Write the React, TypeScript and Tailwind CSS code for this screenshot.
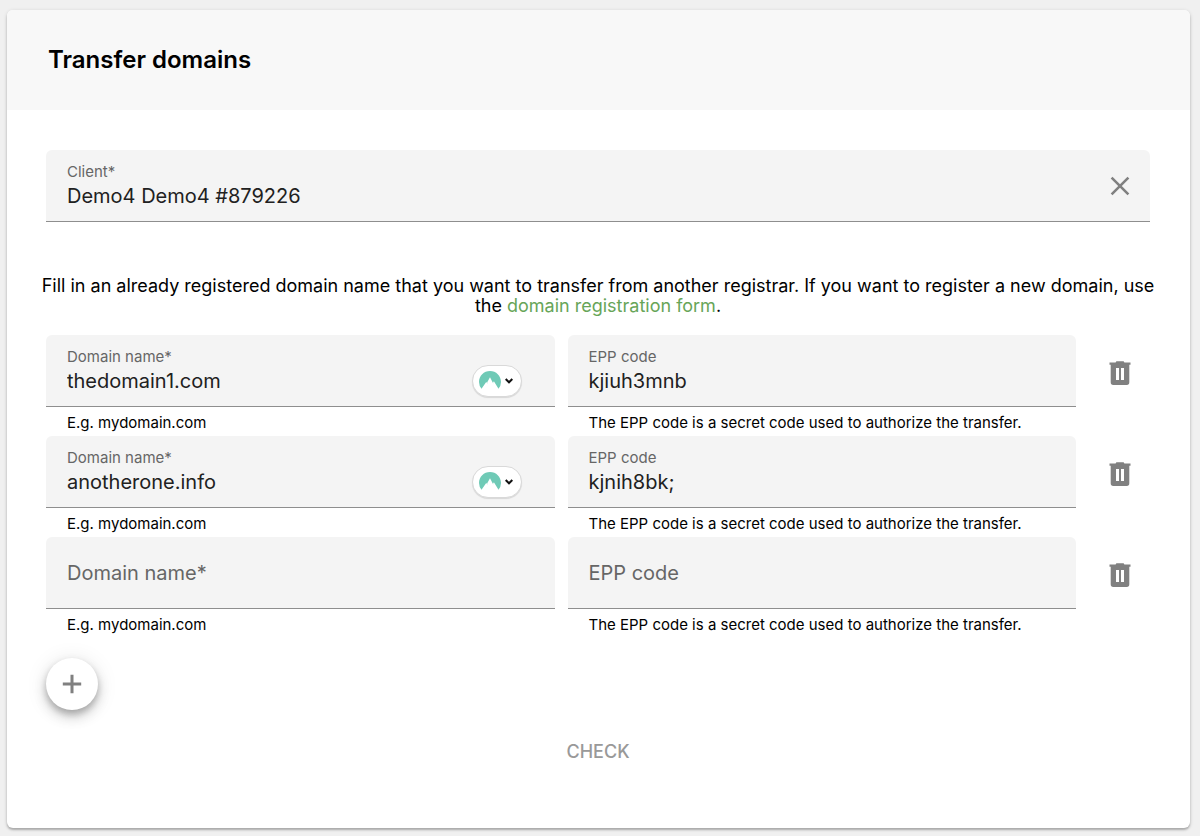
import { useId, useState } from "react";

type Entry = { id: number; domain: string; epp: string };

const initialEntries: Entry[] = [
  { id: 1, domain: "thedomain1.com", epp: "kjiuh3mnb" },
  { id: 2, domain: "anotherone.info", epp: "kjnih8bk;" },
  { id: 3, domain: "", epp: "" },
];

function CloseIcon() {
  return (
    <svg viewBox="0 0 20 20" className="size-5" fill="none" stroke="currentColor" strokeWidth="2.6" aria-hidden="true">
      <path d="M1.6 1.6 18.4 18.4M18.4 1.6 1.6 18.4" />
    </svg>
  );
}

function TrashIcon() {
  return (
    <svg viewBox="0 0 22 24" className="h-6 w-[22px]" fill="currentColor" aria-hidden="true">
      <path
        fillRule="evenodd"
        d="M0.5 1.4H6.6L7.4 0.2H14.6L15.4 1.4H21.5V3.8H20.3V21.3Q20.3 24 17.8 24H4.2Q1.7 24 1.7 21.3V3.8H0.5ZM7 7V19H10V7ZM12 7V19H15V7Z"
      />
    </svg>
  );
}

function PlusIcon() {
  return (
    <svg viewBox="0 0 20 20" className="size-5" fill="none" stroke="currentColor" strokeWidth="3" aria-hidden="true">
      <path d="M10 0.8V19.2M0.8 10H19.2" />
    </svg>
  );
}

function VaultButton() {
  return (
    <button
      type="button"
      aria-label="Open password manager"
      className="flex h-8 w-[50px] shrink-0 items-center gap-1 rounded-full border border-[#d9d9d9] bg-white pl-[6px] text-[#111111] shadow-[0_1px_1px_rgba(0,0,0,0.12)]"
    >
      <svg viewBox="0 0 22 20" className="h-5 w-[22px]" aria-hidden="true">
        <path
          fill="#6fcab6"
          d="M2.5 17.8A11 11 0 0 1 0 11C0 4.9 4.9 0 11 0S22 4.9 22 11A11 11 0 0 1 19.5 17.8L14.9 10.2 14 11.8 14.5 12.9 11 6.3 8.1 11.4 9 13 7.2 10.9Z"
        />
      </svg>
      <svg viewBox="0 0 8 6" className="h-[6px] w-2" fill="none" stroke="currentColor" strokeWidth="2" aria-hidden="true">
        <path d="M0.7 1 4 4.3 7.3 1" />
      </svg>
    </button>
  );
}

type FieldProps = {
  label: string;
  value: string;
  onChange: (value: string) => void;
  hint?: string;
  action?: React.ReactNode;
};

function Field({ label, value, onChange, hint, action }: FieldProps) {
  const id = useId();
  const [floated] = useState(value !== "");
  return (
    <div className="min-w-0">
      <div className="flex h-[72px] items-center rounded-t-md border-b border-[#8e8e8e] bg-[#f4f4f4] pl-[21px]">
        <div className="flex min-w-0 flex-1 flex-col">
          {floated && (
            <label htmlFor={id} className="text-[15px] leading-5 text-[#666666]">
              {label}
            </label>
          )}
          <input
            id={id}
            aria-label={label}
            value={value}
            placeholder={floated ? undefined : label}
            onChange={(event) => onChange(event.target.value)}
            className="h-7 w-full bg-transparent text-xl text-[#212121] outline-none placeholder:text-[#666666]"
          />
        </div>
        {action}
      </div>
      {hint && <p className="flex h-[29px] items-center pt-[3px] pl-[21px] text-[15px] leading-5">{hint}</p>}
    </div>
  );
}

export default function App() {
  const [client, setClient] = useState("Demo4 Demo4 #879226");
  const [entries, setEntries] = useState(initialEntries);

  const update = (id: number, patch: Partial<Entry>) =>
    setEntries((list) => list.map((entry) => (entry.id === id ? { ...entry, ...patch } : entry)));

  return (
    <div className="flex min-h-screen flex-col bg-[#f0f0f0] pt-[10px] pr-[10px] pb-2 pl-[7px] font-['Inter','Liberation_Sans',sans-serif] text-black">
      <main className="flex-1 rounded-md bg-white shadow-[0_2px_2px_rgba(0,0,0,0.22),0_1px_4px_rgba(0,0,0,0.14)]">
        <header className="flex h-[100px] items-center rounded-t-md bg-[#f8f8f8] pl-[41px]">
          <h1 className="text-2xl font-semibold">Transfer domains</h1>
        </header>
        <form className="px-10 pt-10 pb-8 pl-[39px]" onSubmit={(event) => event.preventDefault()}>
          <Field
            label="Client*"
            value={client}
            onChange={setClient}
            action={
              <button type="button" aria-label="Clear client" onClick={() => setClient("")} className="mr-5 text-[#808080]">
                <CloseIcon />
              </button>
            }
          />
          <p className="-mx-2 mt-[54px] mb-[19px] text-center text-lg leading-5">
            Fill in an already registered domain name that you want to transfer from another registrar. If you want to
            register a new domain, use the{" "}
            <a href="#register" className="text-[#67a558]">
              domain registration form
            </a>
            .
          </p>
          {entries.map((entry) => (
            <div key={entry.id} className="grid grid-cols-[1fr_1fr_61px] gap-x-[13px]">
              <Field
                label="Domain name*"
                value={entry.domain}
                onChange={(domain) => update(entry.id, { domain })}
                hint="E.g. mydomain.com"
                action={
                  entry.domain && (
                    <div className="mr-[33px] pt-5">
                      <VaultButton />
                    </div>
                  )
                }
              />
              <Field
                label="EPP code"
                value={entry.epp}
                onChange={(epp) => update(entry.id, { epp })}
                hint="The EPP code is a secret code used to authorize the transfer."
              />
              <button
                type="button"
                aria-label="Remove domain"
                onClick={() => setEntries((list) => list.filter((item) => item.id !== entry.id))}
                className="flex h-[76px] items-center justify-center text-[#808080]"
              >
                <TrashIcon />
              </button>
            </div>
          ))}
          <button
            type="button"
            aria-label="Add domain"
            onClick={() => setEntries((list) => [...list, { id: Date.now(), domain: "", epp: "" }])}
            className="mt-5 flex size-[52px] items-center justify-center rounded-full bg-white text-[#808080] shadow-[0_4px_6px_rgba(0,0,0,0.2),0_7px_13px_rgba(0,0,0,0.16),0_2px_22px_rgba(0,0,0,0.1)]"
          >
            <PlusIcon />
          </button>
          <div className="mt-6 flex justify-center">
            <button type="submit" className="h-9 px-4 text-lg font-medium text-[#999999]">
              CHECK
            </button>
          </div>
        </form>
      </main>
    </div>
  );
}
